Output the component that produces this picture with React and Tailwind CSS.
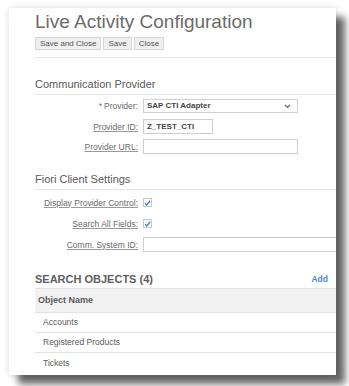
import React from 'react';

const Label = ({ children, underline = true, required = false }) => (
  <div className="w-[103px] shrink-0 text-right text-[8.5px] leading-[10px] text-[#6a6a6a]">
    {required && <span className="text-[#3b7bd4] mr-[2px]">*</span>}
    <span className={underline ? 'underline decoration-[#999] underline-offset-[1px]' : ''}>{children}</span>
  </div>
);

const Check = () => (
  <div className="w-[9px] h-[9px] border border-[#c8c8c8] bg-white flex items-center justify-center">
    <svg width="8" height="8" viewBox="0 0 10 10">
      <path d="M1.5 5.2 L4 7.8 L8.8 1.8" fill="none" stroke="#2f7fd8" strokeWidth="1.8" />
    </svg>
  </div>
);

const SectionHeader = ({ children }) => (
  <div className="text-[11px] leading-[14px] pb-[3px] text-[#5a5a5a] border-b border-[#e6e6e6]">{children}</div>
);

const App = () => {
  const rows = ['Accounts', 'Registered Products', 'Tickets'];

  return (
    <div className="w-[349px] h-[386px] overflow-hidden bg-white font-['Liberation_Sans',Arial,sans-serif]">
      <div className="ml-[9px] mt-[8px] w-[327px] h-[367px] bg-white shadow-[9px_9px_7px_rgba(0,0,0,0.6),0_0_6px_rgba(0,0,0,0.15)] pl-[26px] pt-[3px]">
        <h1 className="text-[19px] leading-[22px] text-[#6b6b6b]">Live Activity Configuration</h1>

        <div className="mt-[4px] flex gap-[2px]">
          {['Save and Close', 'Save', 'Close'].map((b) => (
            <button
              key={b}
              className="h-[13px] px-[4px] text-[8px] leading-[11px] text-[#555] bg-[#efefef] border border-[#d6d6d6]"
            >
              {b}
            </button>
          ))}
        </div>

        <div className="mt-[7px] border-b border-[#e6e6e6]" />

        <div className="mt-[19px]">
          <SectionHeader>Communication Provider</SectionHeader>
        </div>

        <div className="mt-[4px] flex items-center h-[14px]">
          <Label required underline={false}>Provider:</Label>
          <div className="ml-[5px] w-[155px] h-[14px] border border-[#cfcfcf] flex items-center justify-between pl-[3px] pr-[6px]">
            <span className="text-[8px] font-bold text-[#444]">SAP CTI Adapter</span>
            <svg width="7" height="5" viewBox="0 0 7 5">
              <path d="M1 1 L3.5 3.5 L6 1" fill="none" stroke="#666" strokeWidth="1.2" />
            </svg>
          </div>
        </div>

        <div className="mt-[6px] flex items-center h-[15px]">
          <Label>Provider ID:</Label>
          <div className="ml-[5px] w-[70px] h-[15px] border border-[#cfcfcf] flex items-center pl-[3px]">
            <span className="text-[8px] font-bold text-[#444]">Z_TEST_CTI</span>
          </div>
        </div>

        <div className="mt-[5px] flex items-center h-[15px]">
          <Label>Provider URL:</Label>
          <div className="ml-[5px] w-[155px] h-[15px] border border-[#cfcfcf]" />
        </div>

        <div className="mt-[18px]">
          <SectionHeader>Fiori Client Settings</SectionHeader>
        </div>

        <div className="mt-[8px] flex items-center h-[9px]">
          <Label>Display Provider Control:</Label>
          <div className="ml-[5px]">
            <Check />
          </div>
        </div>

        <div className="mt-[12px] flex items-center h-[9px]">
          <Label>Search All Fields:</Label>
          <div className="ml-[5px]">
            <Check />
          </div>
        </div>

        <div className="mt-[9px] flex items-center h-[15px]">
          <Label>Comm. System ID:</Label>
          <div className="ml-[5px] flex-1 h-[15px] border-y border-l border-[#cfcfcf]" />
        </div>

        <div className="mt-[20px] flex justify-between items-center h-[14px] pr-[8px]">
          <span className="text-[11px] font-bold text-[#5e5e5e]">SEARCH OBJECTS (4)</span>
          <span className="text-[8.5px] font-bold text-[#4a86d6]">Add</span>
        </div>

        <div className="mt-[2px] border-t border-[#e4e4e4]">
          <div className="h-[24px] bg-[#f2f2f2] border-b border-[#e4e4e4] flex items-center pl-[3px]">
            <span className="text-[9px] font-bold text-[#5a5a5a]">Object Name</span>
          </div>
          {rows.map((r, i) => (
            <div
              key={r}
              className={`h-[20px] flex items-center pl-[8px] ${i < rows.length - 1 ? 'border-b border-[#e4e4e4]' : ''}`}
            >
              <span className="text-[8.5px] text-[#5a5a5a]">{r}</span>
            </div>
          ))}
        </div>
      </div>
    </div>
  );
};

export default App;
